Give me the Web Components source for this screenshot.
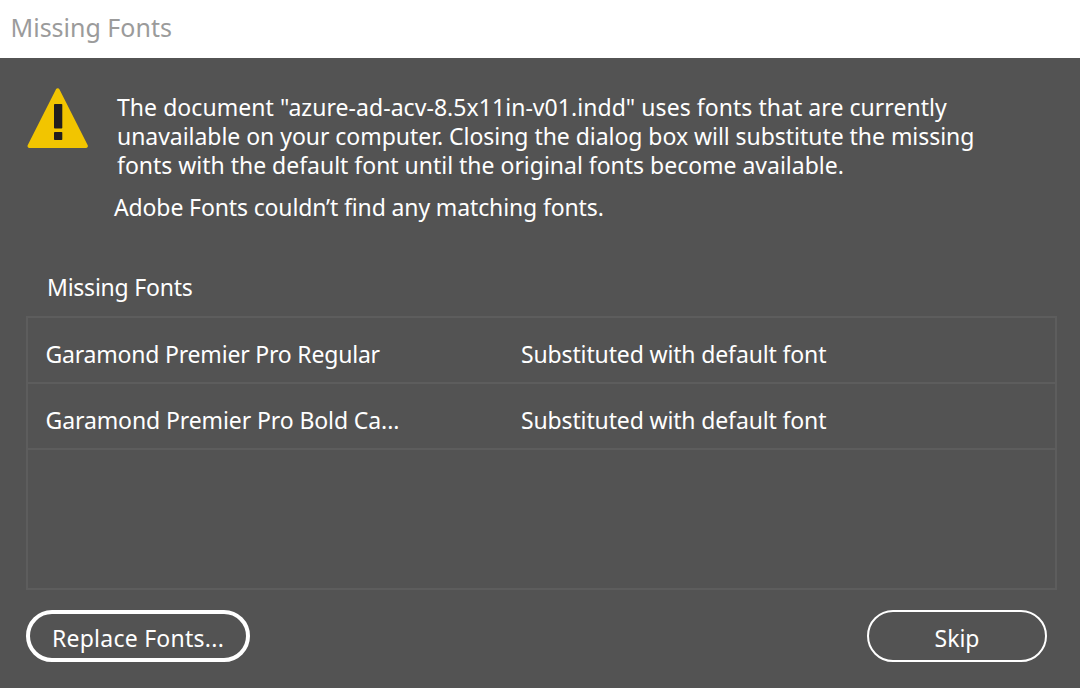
<!DOCTYPE html>
<html><head><meta charset="utf-8"><style>
html,body{margin:0;padding:0;background:#535353}
body{width:1080px;height:688px;overflow:hidden;font-family:"Noto Sans","Liberation Sans",sans-serif}
dlg-message span{display:block;white-space:nowrap}
</style></head><body>
<font-dialog>
<dlg-message><span style="letter-spacing:.05px">The document "azure-ad-acv-8.5x11in-v01.indd" uses fonts that are currently</span><span style="letter-spacing:-.04px">unavailable on your computer. Closing the dialog box will substitute the missing</span><span style="letter-spacing:-.015px">fonts with the default font until the original fonts become available.</span></dlg-message>
<font-table>
<font-row name="Garamond Premier Pro Regular" status="Substituted with default font"></font-row>
<font-row style="--ns:-.1px" name="Garamond Premier Pro Bold Ca..." status="Substituted with default font"></font-row>
</font-table>
</font-dialog>
<script>
function def(name,html,init){customElements.define(name,class extends HTMLElement{constructor(){super();this.attachShadow({mode:'open'}).innerHTML=html;}connectedCallback(){init&&init(this)}})}
def('font-dialog',`<style>
:host{display:flex;flex-direction:column;width:1080px;height:688px;background:#535353;color:#fff;font-size:23px}
.title{height:58px;background:#fff;color:#9b9b9b;box-sizing:border-box;padding:10px 0 0 10.5px;line-height:34px;font-size:25px;flex:none}
.body{flex:1;display:flex;flex-direction:column;padding:0 23px 0 26px}
</style>
<div class="title">Missing Fonts</div>
<div class="body"><slot></slot></div>`);
def('dlg-message',`<style>
:host{display:flex;align-items:flex-start;font-size:23px;line-height:29px;padding-top:35px;height:86px}
svg{flex:none;width:62px;height:60px;margin:-5px 28px 0 1px;display:block}
</style>
<svg viewBox="0 0 62 60"><path d="M29 1.2 a2 2 0 0 1 3.4 0 L60.6 57 a2 2 0 0 1 -1.6 3 H2.4 A2 2 0 0 1 .8 57Z" fill="#f2c500"/><rect x="27" y="16" width="8.3" height="24.5" rx=".8" fill="#221f1f"/><rect x="27" y="44" width="8.3" height="8" rx=".8" fill="#221f1f"/></svg>
<div><slot></slot></div>`);
def('font-table',`<style>
:host{display:block;font-size:23px}
.adobe{margin:12px 0 0 88px;line-height:32px;height:32px;white-space:nowrap;letter-spacing:-.13px}
.label{margin:48px 0 0 21px;line-height:32px;height:32px;letter-spacing:-.23px}
.t{margin-top:13px;height:274px;box-sizing:border-box;border:2px solid #5d5d5d}
.foot{display:flex;justify-content:space-between;margin-top:20px;padding-right:10px}
</style>
<div class="adobe">Adobe Fonts couldn’t find any matching fonts.</div>
<div class="label">Missing Fonts</div>
<div class="t"><slot></slot></div>
<div class="foot"><dlg-button primary>Replace Fonts...</dlg-button><dlg-button>Skip</dlg-button></div>`);
def('font-row',`<style>
:host{display:flex;height:66px;box-sizing:border-box;border-bottom:2px solid #5d5d5d;align-items:center;padding:8px 0 0 17.5px;font-size:23px}
.n{width:475.5px;flex:none;letter-spacing:var(--ns,-.2px);white-space:nowrap}
.s{letter-spacing:-.14px;white-space:nowrap}
</style><div class="n"></div><div class="s"></div>`,el=>{el.shadowRoot.querySelector('.n').textContent=el.getAttribute('name');el.shadowRoot.querySelector('.s').textContent=el.getAttribute('status')});
def('dlg-button',`<style>
:host{display:flex;align-items:center;justify-content:center;box-sizing:border-box;height:52px;width:180px;border:2px solid #fff;border-radius:26px;padding-top:3px;font-size:23px;color:#fff}
:host([primary]){width:224px;border-width:4px;letter-spacing:.25px}
</style><slot></slot>`);
</script>
</body></html>
